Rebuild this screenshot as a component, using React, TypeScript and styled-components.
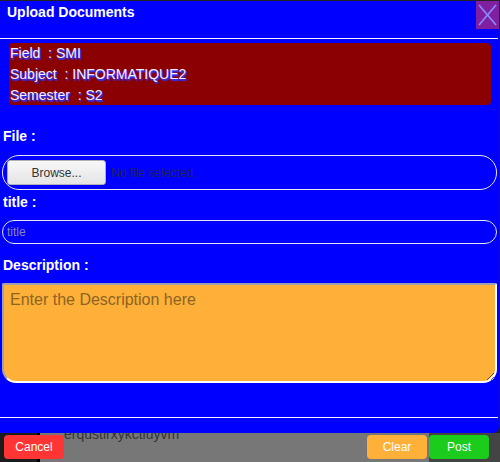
import React from "react";
import styled, { createGlobalStyle } from "styled-components";

const Global = createGlobalStyle`
  html, body { margin: 0; padding: 0; }
  body {
    background: #222;
    font-family: "Liberation Sans", Arial, sans-serif;
    width: 500px;
    height: 462px;
    overflow: hidden;
  }
`;

const Page = styled.div`
  display: flex;
  flex-direction: column;
  width: 500px;
  height: 462px;
  padding-top: 1px;
  box-sizing: border-box;
`;

const Dialog = styled.div`
  position: relative;
  z-index: 1;
  width: 499px;
  height: 432px;
  background: #0000ff;
  border-bottom-right-radius: 6px;
  display: flex;
  flex-direction: column;
  box-sizing: border-box;
`;

const Header = styled.div`
  display: flex;
  justify-content: space-between;
  align-items: flex-start;
  height: 37px;
`;

const Title = styled.h1`
  margin: 0;
  padding: 3px 0 0 7px;
  font-size: 14px;
  line-height: 16px;
  font-weight: bold;
  color: #fff;
`;

const CloseButton = styled.button`
  width: 23px;
  height: 28px;
  padding: 0;
  border: none;
  background: #8020a0;
  display: flex;
  align-items: center;
  justify-content: center;
  cursor: pointer;
`;

const Rule = styled.hr<{ $top?: number }>`
  margin: ${(p) => p.$top ?? 0}px 1px 0 0;
  border: none;
  height: 1px;
  background: #f2f2f8;
`;

const InfoBox = styled.div`
  margin: 4px 8px 0 9px;
  height: 62px;
  background: #8b0000;
  border-radius: 4px;
  padding-left: 1px;
`;

const InfoLine = styled.div`
  font-size: 14px;
  line-height: 21px;
  white-space: pre;
  color: #f4f0ff;
  text-shadow: 1px 1px 1px #3030ff, 1px 2px 1px #3030ff;
`;

const Label = styled.label<{ $top: number }>`
  display: block;
  margin: ${(p) => p.$top}px 0 0 3px;
  font-size: 14px;
  line-height: 16px;
  font-weight: bold;
  color: #fff;
`;

const FilePill = styled.div`
  margin: 11px 2px 0 2px;
  height: 35px;
  box-sizing: border-box;
  border: 1px solid #e6e6f2;
  border-radius: 17px;
  display: flex;
  align-items: center;
  gap: 5px;
  padding-left: 4px;
`;

const BrowseButton = styled.span`
  width: 99px;
  height: 25px;
  box-sizing: border-box;
  border: 1px solid #b0b0b0;
  border-radius: 3px;
  background: linear-gradient(#f8f8f8, #e4e4e4);
  display: flex;
  align-items: center;
  justify-content: center;
  font-size: 12px;
  color: #333;
`;

const FileText = styled.span`
  font-size: 12px;
  color: #222255;
`;

const TextInput = styled.input`
  margin: 10px 2px 0 2px;
  height: 24px;
  box-sizing: border-box;
  border: 1px solid #e6e6f2;
  border-radius: 12px;
  background: transparent;
  padding: 0 0 0 4px;
  font-family: "Liberation Sans", Arial, sans-serif;
  font-size: 12px;
  color: #fff;
  outline: none;
  &::placeholder { color: #8888aa; }
`;

const TextArea = styled.textarea`
  margin: 10px 2px 0 2px;
  height: 100px;
  box-sizing: border-box;
  border-style: solid;
  border-width: 2px;
  border-color: #a0a0b0 #ffffff #ffffff #a0a0b0;
  border-radius: 2px 2px 14px 14px;
  background: #ffb038;
  padding: 5px 6px;
  font-family: "Liberation Sans", Arial, sans-serif;
  font-size: 16px;
  line-height: 20px;
  color: #222;
  outline: none;
  &::placeholder { color: #8b6424; }
`;

const Footer = styled.div`
  flex: 1;
  display: flex;
  align-items: flex-start;
  padding: 2px 11px 0 4px;
  background: linear-gradient(
    to right,
    #1c1c1c 0 37px,
    #000 37px 40px,
    #777 40px 429px,
    #444 429px
  );
`;

const FooterButton = styled.button<{ $bg: string }>`
  width: 60px;
  height: 24px;
  border: none;
  border-radius: 4px;
  background: ${(p) => p.$bg};
  color: #fff;
  font-family: "Liberation Sans", Arial, sans-serif;
  font-size: 12px;
  padding: 0;
  cursor: pointer;
`;

const HiddenText = styled.span`
  margin: -9px 0 0 0;
  font-size: 14px;
  line-height: 16px;
  color: #333;
`;

const Spacer = styled.div`
  flex: 1;
`;

const ButtonGroup = styled.div`
  display: flex;
  gap: 2px;
`;

export default function App() {
  return (
    <>
      <Global />
      <Page>
        <Dialog>
          <Header>
            <Title>Upload Documents</Title>
            <CloseButton aria-label="close">
              <svg width="23" height="28" viewBox="0 0 23 28">
                <line x1="3" y1="4" x2="20" y2="24" stroke="#8a8cff" strokeWidth="1.6" />
                <line x1="20" y1="4" x2="3" y2="24" stroke="#8a8cff" strokeWidth="1.6" />
              </svg>
            </CloseButton>
          </Header>
          <Rule />
          <InfoBox>
            <InfoLine>{"Field  : SMI"}</InfoLine>
            <InfoLine>{"Subject  : INFORMATIQUE2"}</InfoLine>
            <InfoLine>{"Semester  : S2"}</InfoLine>
          </InfoBox>
          <Label $top={23}>File :</Label>
          <FilePill>
            <BrowseButton>Browse...</BrowseButton>
            <FileText>No file selected.</FileText>
          </FilePill>
          <Label $top={4}>title :</Label>
          <TextInput placeholder="title" />
          <Label $top={13}>Description :</Label>
          <TextArea placeholder="Enter the Description here" />
          <Rule $top={34} />
        </Dialog>
        <Footer>
          <FooterButton $bg="#ff3535">Cancel</FooterButton>
          <HiddenText>erqustirxykctiuyvm</HiddenText>
          <Spacer />
          <ButtonGroup>
            <FooterButton $bg="#ffb038">Clear</FooterButton>
            <FooterButton $bg="#1ccc1c">Post</FooterButton>
          </ButtonGroup>
        </Footer>
      </Page>
    </>
  );
}
